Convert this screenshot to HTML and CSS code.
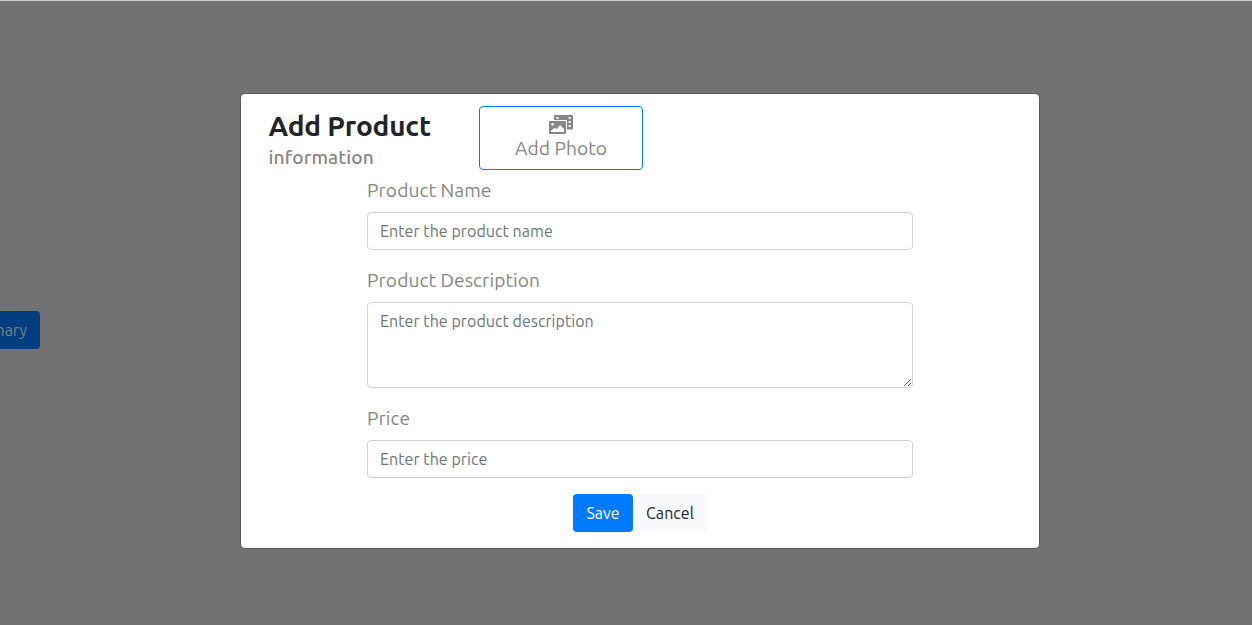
FILE: index.html
```
<!DOCTYPE html>
<html lang="en">
<head>
<meta charset="utf-8">
<title>Add Product</title>
<link rel="stylesheet" href="styles.css">
</head>
<body>
<div class="page"><button class="summary" type="button">Summary</button></div>
<div class="overlay">
  <form class="modal">
    <header class="head">
      <div class="titles">
        <h1 class="title">Add Product</h1>
        <p class="subtitle">information</p>
      </div>
      <button class="photo" type="button">
        <svg class="photo-icon" width="24" height="19" viewBox="0 0 24 19" fill="#868686" aria-hidden="true">
          <path fill-rule="evenodd" d="M6 0h17a1 1 0 0 1 1 1v12.500a1 1 0 0 1-1 1h-5V5H5V1a1 1 0 0 1 1-1zM7.500 2v2h2V2zM19.700 2v2h2V2zM19.700 6v2h2V6zM19.700 10v2h2v-2z"/>
          <path fill-rule="evenodd" d="M1 6h15a1 1 0 0 1 1 1v11a1 1 0 0 1-1 1H1a1 1 0 0 1-1-1V7a1 1 0 0 1 1-1zM2 17h13v-3l-3.800-4-3.700 4-1.500-1.200L2 15.500zM3.500 8a1.400 1.400 0 1 0 .01 0z"/>
        </svg>
        <span class="photo-label">Add Photo</span>
      </button>
    </header>
    <div class="fields">
      <label class="label name-label" for="name">Product Name</label>
      <input class="control" id="name" placeholder="Enter the product name">
      <label class="label" for="desc">Product Description</label>
      <textarea class="control area" id="desc" placeholder="Enter the product description"></textarea>
      <label class="label" for="price">Price</label>
      <input class="control" id="price" placeholder="Enter the price">
    </div>
    <footer class="actions">
      <button class="btn save" type="button">Save</button>
      <button class="btn cancel" type="button"><span class="cancel-label">Cancel</span></button>
    </footer>
  </form>
</div>
</body>
</html>
```
FILE: styles.css
```
* { box-sizing: border-box; }
body {
  margin: 0;
  height: 625px;
  overflow: hidden;
  background: #727272;
  border-top: 1px solid #c9cbcc;
  font-family: Ubuntu, "Noto Sans", sans-serif;
  font-size: 16px;
  line-height: 24px;
  color: #212529;
}
button, input, textarea { font: inherit; }
.page { padding-top: 310px; }
.summary {
  display: block;
  width: 100px;
  height: 38px;
  margin-left: -60px;
  padding: 0 13px 0 0;
  border: 0;
  border-radius: 4px;
  background: #003e80;
  color: #808080;
  text-align: right;
}
.overlay {
  position: absolute;
  inset: 0;
  display: flex;
  justify-content: center;
  align-items: flex-start;
  padding: 93px 0 0 28px;
}
.modal {
  width: 800px;
  height: 456px;
  background: #fff;
  background-clip: padding-box;
  border: 1px solid rgba(0, 0, 0, .2);
  border-radius: 5px;
}
.head { display: flex; padding: 12px 0 0 27.500px; height: 76px; }
.titles { width: 210.500px; padding-top: 3px; }
.title { margin: 0; font-size: 28px; line-height: 34px; font-weight: 700; letter-spacing: -.2px; }
.subtitle { margin: 2px 0 0; font-size: 19.200px; line-height: 24px; font-weight: 500; color: #868686; letter-spacing: .1px; }
.photo {
  display: flex;
  flex-direction: column;
  align-items: center;
  width: 164px;
  height: 64px;
  padding: 8px 0 0;
  background: #fff;
  border: 1px solid #007bff;
  border-radius: 4px;
  color: #868686;
}
.photo-icon { display: block; flex: none; }
.photo-label { font-size: 19.200px; line-height: 28px; letter-spacing: .05px; }
.fields { display: flex; flex-direction: column; width: 546px; margin-left: 126px; }
.label { height: 30px; margin: 16px 0 6px; font-size: 19.200px; line-height: 28px; letter-spacing: .06px; color: #868686; }
.name-label { margin-top: 6px; }
.control {
  width: 546px;
  height: 38px;
  margin: 0;
  padding: 6px 12px;
  border: 1px solid #ced4da;
  border-radius: 4px;
  background: #fff;
}
.control::placeholder { color: #6c757d; letter-spacing: .06px; opacity: 1; }
.area { height: 86px; resize: vertical; }
.actions { display: flex; margin: 16px 0 0 332px; }
.btn { height: 38px; padding: 0; border: 0; border-radius: 4px; }
.save { width: 60px; background: #007bff; color: #fff; }
.cancel { width: 74px; background: #f8f9fa; color: #212529; letter-spacing: .1px; }
```
